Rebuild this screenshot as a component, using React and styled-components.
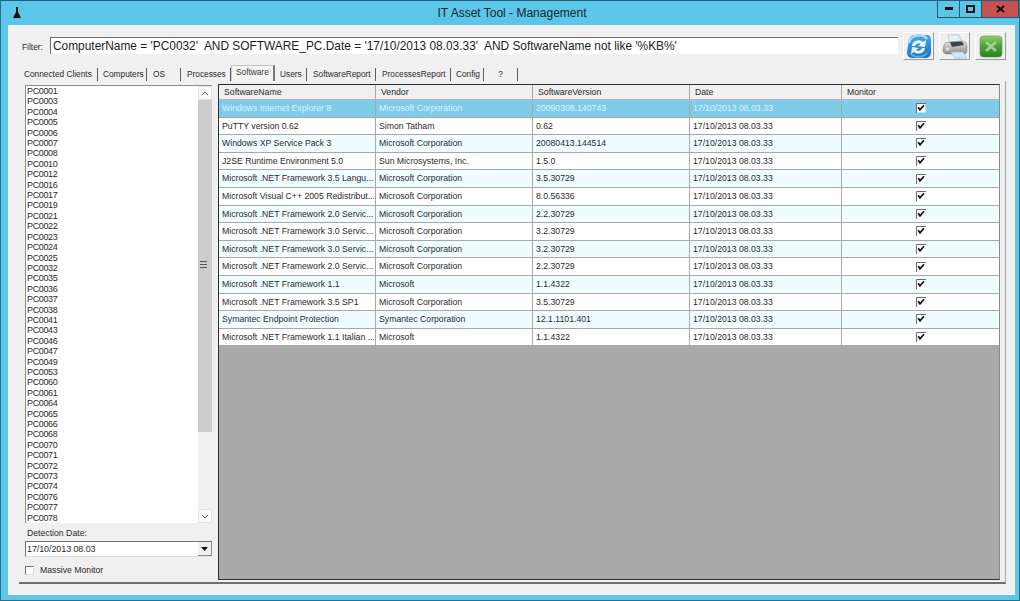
import React from 'react';
import styled, { createGlobalStyle } from 'styled-components';

const Global = createGlobalStyle`
	html, body {
		margin: 0;
		padding: 0;
		background: #5cc6e8;
	}
	* {
		box-sizing: border-box;
	}
`;

const Window = styled.div`
	width: 1020px;
	height: 601px;
	display: flex;
	flex-direction: column;
	overflow: hidden;
	background: #5cc6e8;
	border: 1px solid #2a6f8c;
	border-top-color: #1f5f7c;
	font-family: "Liberation Sans", Arial, sans-serif;
	font-size: 8.7px;
	color: #2a2a2a;
`;

const TitleBar = styled.div`
	height: 24px;
	flex: none;
	display: flex;
	align-items: flex-start;
	position: relative;
`;

const AppIcon = styled.svg`
	width: 8px;
	height: 11px;
	margin: 6px 0 0 12px;
`;

const Title = styled.div`
	position: absolute;
	left: 4px;
	right: 0;
	top: 5px;
	text-align: center;
	font-size: 12px;
	color: #16242c;
`;

const Controls = styled.div`
	position: absolute;
	top: -1px;
	left: 936px;
	display: flex;
	height: 18px;
	border: 1px solid #27566e;
	border-top: none;
`;

const Control = styled.div`
	width: ${p => p.$w}px;
	display: flex;
	align-items: center;
	justify-content: center;
	background: ${p => p.$close ? '#c75050' : 'transparent'};
	border-right: ${p => p.$close ? 'none' : '1px solid #27566e'};
`;

const Client = styled.div`
	width: 1007px;
	height: 570px;
	margin-left: 7px;
	flex: none;
	background: #f0f0f0;
	padding: 12px 10px 11px 11px;
	display: flex;
	flex-direction: column;
	border-bottom: 1px solid #fafafa;
`;

const FilterRow = styled.div`
	display: flex;
	align-items: flex-start;
	height: 29px;
	flex: none;
`;

const FilterLabel = styled.label`
	width: 31px;
	flex: none;
	padding: 5px 0 0 3px;
	font-size: 8.4px;
`;

const FilterInput = styled.div`
	width: 848px;
	height: 17px;
	flex: none;
	background: #fff;
	border-top: 1px solid #6e6e6e;
	border-left: 1px solid #6e6e6e;
	padding: 0 0 0 2px;
	font-size: 11.9px;
	line-height: 16px;
	white-space: pre;
	color: #1c1c1c;
`;

const ToolButtons = styled.div`
	display: flex;
	flex: none;
	gap: 5px;
	margin: -5px 0 0 5px;
`;

const ToolButton = styled.button`
	width: 31px;
	height: 28px;
	padding: 0;
	display: flex;
	align-items: center;
	justify-content: center;
	background: #f0f0f0;
	border: 1px solid #fff;
	border-right: 1px solid #9a9a9a;
	border-bottom: 1px solid #9a9a9a;
`;

const Tabs = styled.div`
	display: flex;
	height: 16px;
	flex: none;
	margin-bottom: -1px;
	align-items: flex-end;
	font-size: 8.3px;
`;

const Tab = styled.div`
	width: ${p => p.$w}px;
	height: ${p => p.$active ? 16 : 13}px;
	margin-bottom: 1px;
	text-align: ${p => p.$center ? 'center' : 'left'};
	padding-left: ${p => p.$center ? 0 : p.$pad}px;
	line-height: 12px;
	white-space: nowrap;
	border-right: 1px solid #5c5c5c;
	${p => p.$active && `
		background: #f4f4f4;
		border: 1px solid #c4c4c4;
		border-right: 2px solid #777;
		border-bottom: none;
		line-height: 12px;
		color: #3a3a3a;
	`}
`;

const Panel = styled.div`
	width: 987px;
	height: 503px;
	flex: none;
	display: flex;
	gap: 6px;
	padding: 3px 5px 3px 6px;
	border-right: 1px solid #a8a8a8;
	border-bottom: 2px solid #6e6e6e;
`;

const Sidebar = styled.div`
	width: 187px;
	flex: none;
	display: flex;
	flex-direction: column;
	padding-top: 1px;
`;

const ListBox = styled.div`
	height: 438px;
	display: flex;
	background: #fff;
	border-top: 1px solid #8c8c8c;
	border-left: 1px solid #8c8c8c;
`;

const Items = styled.div`
	flex: 1;
	padding: 0 0 0 1px;
`;

const Item = styled.div`
	height: 10.41px;
	line-height: 10.4px;
	font-size: 9px;
	letter-spacing: -0.35px;
`;

const ScrollBar = styled.div`
	width: 14px;
	flex: none;
	display: flex;
	flex-direction: column;
	background: #f0f0f0;
`;

const ScrollArrow = styled.div`
	height: 14px;
	flex: none;
	display: flex;
	align-items: center;
	justify-content: center;
	background: #fafafa;
	border: 1px solid #e2e2e2;
`;

const Thumb = styled.div`
	height: 332px;
	flex: none;
	display: flex;
	align-items: center;
	justify-content: center;
	background: #cdcdcd;
`;

const Track = styled.div`
	flex: 1;
`;

const Grip = styled.div`
	width: 7px;
	height: 7px;
	margin: -3px 3px 0 0;
	background: repeating-linear-gradient(#555 0 1px, #cdcdcd 1px 3px);
`;

const FieldLabel = styled.div`
	margin: 5px 0 0 2px;
	height: 13px;
	line-height: 11px;
`;

const Combo = styled.div`
	width: 187px;
	height: 16px;
	display: flex;
	background: #fff;
	border-top: 1px solid #6e6e6e;
	border-left: 1px solid #6e6e6e;
	border-bottom: 1px solid #ddd;
	font-size: 9px;
	letter-spacing: -0.1px;
	line-height: 14px;
	padding-left: 1px;
	justify-content: space-between;
`;

const ComboButton = styled.div`
	width: 14px;
	display: flex;
	align-items: center;
	justify-content: center;
	background: #f0f0f0;
	border-right: 1px solid #8a8a8a;
	border-bottom: 1px solid #8a8a8a;
`;

const CheckRow = styled.div`
	display: flex;
	align-items: center;
	gap: 6px;
	margin-top: 8px;
`;

const CheckBox = styled.div`
	width: 9px;
	height: 9px;
	background: #fff;
	border-top: 1px solid #777;
	border-left: 1px solid #777;
	border-right: 1px solid #ddd;
	border-bottom: 1px solid #ddd;
`;

const DataGrid = styled.div`
	flex: 1;
	height: 496px;
	background: #a9a9a9;
	border: 1px solid #2e2e2e;
	border-right-color: #8a8a8a;
`;

const Row = styled.div`
	display: grid;
	grid-template-columns: 157px 157px 157px 152px 1fr;
	height: ${p => p.$header ? '15px' : '17.6px'};
	background: ${p => p.$header ? '#f0f0f0' : p.$selected ? '#7ecbea' : p.$alt ? '#effdff' : '#fff'};
	color: ${p => p.$selected ? '#dcf3fb' : 'inherit'};
	border-bottom: 1px solid ${p => p.$header ? '#b8b8b8' : '#a8a8a8'};
`;

const Cell = styled.div`
	padding-left: ${p => p.$center ? 0 : p.$header ? 5 : 3}px;
	line-height: ${p => p.$header ? '15px' : '17px'};
	white-space: nowrap;
	overflow: hidden;
	border-right: 1px solid #a8a8a8;
	display: ${p => p.$center ? 'flex' : 'block'};
	justify-content: center;
	align-items: center;

	&:last-child {
		border-right: none;
	}
`;

const Tick = styled.svg`
	width: 10px;
	height: 10px;
`;

const pcs = ['0001', '0003', '0004', '0005', '0006', '0007', '0008', '0010', '0012', '0016', '0017', '0019', '0021', '0022', '0023', '0024', '0025', '0032', '0035', '0036', '0037', '0038', '0041', '0043', '0046', '0047', '0049', '0053', '0060', '0061', '0064', '0065', '0066', '0068', '0070', '0071', '0072', '0073', '0074', '0076', '0077', '0078'];

const tabs = [
	{ text: 'Connected Clients', w: 79, pad: 5 },
	{ text: 'Computers', w: 49, pad: 5 },
	{ text: 'OS', w: 34, pad: 6 },
	{ text: 'Processes', w: 50, pad: 6 },
	{ text: 'Software', w: 44, pad: 4, active: true },
	{ text: 'Users', w: 32, pad: 5 },
	{ text: 'SoftwareReport', w: 69, pad: 6 },
	{ text: 'ProcessesReport', w: 75, pad: 6 },
	{ text: 'Config', w: 33, pad: 5 },
	{ text: '?', w: 34, center: true },
];

const ms = 'Microsoft Corporation';
const rows = [
	['Windows Internet Explorer 8', ms, '20090308.140743'],
	['PuTTY version 0.62', 'Simon Tatham', '0.62'],
	['Windows XP Service Pack 3', ms, '20080413.144514'],
	['J2SE Runtime Environment 5.0', 'Sun Microsystems, Inc.', '1.5.0'],
	['Microsoft .NET Framework 3.5 Langu...', ms, '3.5.30729'],
	['Microsoft Visual C++ 2005 Redistribut...', ms, '8.0.56336'],
	['Microsoft .NET Framework 2.0 Servic...', ms, '2.2.30729'],
	['Microsoft .NET Framework 3.0 Servic...', ms, '3.2.30729'],
	['Microsoft .NET Framework 3.0 Servic...', ms, '3.2.30729'],
	['Microsoft .NET Framework 2.0 Servic...', ms, '2.2.30729'],
	['Microsoft .NET Framework 1.1', 'Microsoft', '1.1.4322'],
	['Microsoft .NET Framework 3.5 SP1', ms, '3.5.30729'],
	['Symantec Endpoint Protection', 'Symantec Corporation', '12.1.1101.401'],
	['Microsoft .NET Framework 1.1 Italian ...', 'Microsoft', '1.1.4322'],
];

const Checked = () => (
	<Tick viewBox="0 0 10 10">
		<rect x="0.5" y="0.5" width="9" height="9" fill="#fff" />
		<path d="M0.5 10 L0.5 0.5 L10 0.5" fill="none" stroke="#6a6a6a" strokeWidth="1" />
		<path d="M2.2 4.2 L4 6.8 L8 2.2" fill="none" stroke="#111" strokeWidth="1.7" />
	</Tick>
);

const Caret = ({ up, size = 8, color = '#555' }) => (
	<svg width={size} height="5" viewBox="0 0 8 5">
		<path d={up ? 'M1 4 L4 1 L7 4' : 'M1 1 L4 4 L7 1'} fill="none" stroke={color} strokeWidth="1" />
	</svg>
);

const RefreshIcon = () => (
	<svg width="27" height="25" viewBox="0 0 27 25">
		<defs>
			<linearGradient id="blue" x1="0" y1="0" x2="0" y2="1">
				<stop offset="0" stopColor="#4aa8e6" />
				<stop offset="0.5" stopColor="#2d8ddb" />
				<stop offset="1" stopColor="#1b6fc2" />
			</linearGradient>
		</defs>
		<path d="M4 6 Q5 1 10 1 L22 1 Q26 1 26 6 L26 18 Q26 24 20 24 L8 24 Q2 24 2 18 Z" fill="url(#blue)" />
		<path d="M4 9 A10 9 0 0 1 22 5" fill="none" stroke="#a9dcf6" strokeWidth="2.5" />
		<path d="M7 12 A6.5 6 0 0 1 18 8 L21 6 L20 13 L13 12 L16 10 A4 4 0 0 0 10 12 Z" fill="#f2fafe" />
		<path d="M20 14 A6.5 6 0 0 1 9 18 L6 20 L7 13 L14 14 L11 16 A4 4 0 0 0 17 14 Z" fill="#dff1fb" />
		<path d="M5 19 A10 8 0 0 0 22 19" fill="none" stroke="#58b0ea" strokeWidth="2" />
	</svg>
);

const PrinterIcon = () => (
	<svg width="28" height="25" viewBox="0 0 28 25">
		<defs>
			<linearGradient id="body" x1="0" y1="0" x2="0" y2="1">
				<stop offset="0" stopColor="#e4e4e4" />
				<stop offset="1" stopColor="#8c8c8c" />
			</linearGradient>
		</defs>
		<path d="M7 1 L18 1 L21 8 L9 9 Z" fill="#e4f2fa" stroke="#a8b4bc" strokeWidth="0.6" />
		<path d="M3 11 Q4 8 8 8 L22 7 Q26 8 26 12 L26 17 Q26 20 22 20 L6 20 Q2 20 2 16 Z" fill="url(#body)" stroke="#777" strokeWidth="0.5" />
		<path d="M9 8 L21 7.5 L23 11 L11 13 Z" fill="#3f4347" />
		<path d="M10 18 L22 18 L26 24 L14 24 Z" fill="#cfe8f5" stroke="#a8b4bc" strokeWidth="0.6" />
		<ellipse cx="6.5" cy="15" rx="2.5" ry="2" fill="#dcdcdc" stroke="#888" strokeWidth="0.4" />
	</svg>
);

const ExcelIcon = () => (
	<svg width="26" height="25" viewBox="0 0 26 25">
		<defs>
			<linearGradient id="green" x1="0" y1="0" x2="0" y2="1">
				<stop offset="0" stopColor="#8fd060" />
				<stop offset="0.45" stopColor="#4fa53a" />
				<stop offset="1" stopColor="#2a8020" />
			</linearGradient>
		</defs>
		<rect x="2" y="2" width="22" height="21" rx="3.5" fill="url(#green)" stroke="#5b9a42" strokeWidth="0.6" />
		<path d="M8 8 L18 17 M18 8 L8 17" stroke="#a8cf98" strokeWidth="2.6" />
	</svg>
);

const App = () => {
	return (
		<Window>
			<Global />
			<TitleBar>
				<AppIcon viewBox="0 0 8 11">
					<path d="M3 0 L5 0 L5 5 L7 9 L8 11 L0 11 L1 9 L3 5 Z" fill="#111" />
				</AppIcon>
				<Title>IT Asset Tool - Management</Title>
				<Controls>
					<Control $w={22}>
						<svg width="8" height="3"><rect width="8" height="3" fill="#111" /></svg>
					</Control>
					<Control $w={22}>
						<svg width="9" height="8"><rect x="1" y="1" width="7" height="6" fill="none" stroke="#111" strokeWidth="2" /></svg>
					</Control>
					<Control $w={36} $close>
						<svg width="9" height="8"><path d="M1 1 L8 7 M8 1 L1 7" stroke="#111" strokeWidth="2" /></svg>
					</Control>
				</Controls>
			</TitleBar>
			<Client>
				<FilterRow>
					<FilterLabel>Filter:</FilterLabel>
					<FilterInput>ComputerName = 'PC0032'  AND SOFTWARE_PC.Date = '17/10/2013 08.03.33'  AND SoftwareName not like '%KB%'</FilterInput>
					<ToolButtons>
						<ToolButton><RefreshIcon /></ToolButton>
						<ToolButton><PrinterIcon /></ToolButton>
						<ToolButton><ExcelIcon /></ToolButton>
					</ToolButtons>
				</FilterRow>
				<Tabs>
					{tabs.map(t => (
						<Tab key={t.text} $w={t.w} $pad={t.pad} $center={t.center} $active={t.active}>{t.text}</Tab>
					))}
				</Tabs>
				<Panel>
					<Sidebar>
						<ListBox>
							<Items>
								{pcs.map(p => <Item key={p}>PC{p}</Item>)}
							</Items>
							<ScrollBar>
								<ScrollArrow><Caret up /></ScrollArrow>
								<Thumb><Grip /></Thumb>
								<Track />
								<ScrollArrow><Caret /></ScrollArrow>
							</ScrollBar>
						</ListBox>
						<FieldLabel>Detection Date:</FieldLabel>
						<Combo>
							17/10/2013 08.03
							<ComboButton>
								<svg width="7" height="4"><path d="M0 0 L7 0 L3.5 4 Z" fill="#111" /></svg>
							</ComboButton>
						</Combo>
						<CheckRow>
							<CheckBox />
							Massive Monitor
						</CheckRow>
					</Sidebar>
					<DataGrid>
						<Row $header>
							<Cell $header>SoftwareName</Cell>
							<Cell $header>Vendor</Cell>
							<Cell $header>SoftwareVersion</Cell>
							<Cell $header>Date</Cell>
							<Cell $header>Monitor</Cell>
						</Row>
						{rows.map((r, i) => (
							<Row key={i} $selected={i === 0} $alt={i % 2 === 0}>
								<Cell>{r[0]}</Cell>
								<Cell>{r[1]}</Cell>
								<Cell>{r[2]}</Cell>
								<Cell>17/10/2013 08.03.33</Cell>
								<Cell $center><Checked /></Cell>
							</Row>
						))}
					</DataGrid>
				</Panel>
			</Client>
		</Window>
	);
};

export default App;
